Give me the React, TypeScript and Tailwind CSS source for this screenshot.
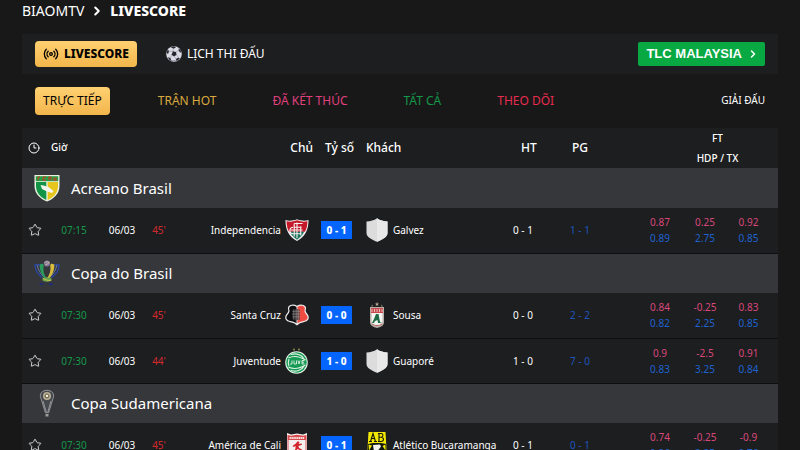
import { useState } from "react";
import { ChevronRight, Clock3, Radio, Star } from "lucide-react";

type Match = {
  time: string;
  minute: string;
  home: string;
  homeLogo: string;
  away: string;
  awayLogo: string;
  score: string;
  ht: string;
  corners: string;
  hdp: string[];
  tx: string[];
};

type League = {
  name: string;
  logo: string;
  matches: Match[];
};

const TABS = [
  { label: "TRỰC TIẾP", color: "text-black" },
  { label: "TRẬN HOT", color: "text-[#d9a93f]" },
  { label: "ĐÃ KẾT THÚC", color: "text-[#e0407f]" },
  { label: "TẤT CẢ", color: "text-[#14994a]" },
  { label: "THEO DÕI", color: "text-[#e82c4f]" },
];

const LEAGUES: League[] = [
  {
    name: "Acreano Brasil",
    logo: "acreano",
    matches: [
      {
        time: "07:15",
        minute: "45'",
        home: "Independencia",
        homeLogo: "independencia",
        away: "Galvez",
        awayLogo: "blank",
        score: "0 - 1",
        ht: "0 - 1",
        corners: "1 - 1",
        hdp: ["0.87", "0.25", "0.92"],
        tx: ["0.89", "2.75", "0.85"],
      },
    ],
  },
  {
    name: "Copa do Brasil",
    logo: "copa",
    matches: [
      {
        time: "07:30",
        minute: "45'",
        home: "Santa Cruz",
        homeLogo: "santacruz",
        away: "Sousa",
        awayLogo: "sousa",
        score: "0 - 0",
        ht: "0 - 0",
        corners: "2 - 2",
        hdp: ["0.84", "-0.25", "0.83"],
        tx: ["0.82", "2.25", "0.85"],
      },
      {
        time: "07:30",
        minute: "44'",
        home: "Juventude",
        homeLogo: "juventude",
        away: "Guaporé",
        awayLogo: "blank",
        score: "1 - 0",
        ht: "1 - 0",
        corners: "7 - 0",
        hdp: ["0.9", "-2.5", "0.91"],
        tx: ["0.83", "3.25", "0.84"],
      },
    ],
  },
  {
    name: "Copa Sudamericana",
    logo: "sudamericana",
    matches: [
      {
        time: "07:30",
        minute: "45'",
        home: "América de Cali",
        homeLogo: "america",
        away: "Atlético Bucaramanga",
        awayLogo: "bucaramanga",
        score: "0 - 1",
        ht: "0 - 1",
        corners: "0 - 1",
        hdp: ["0.74", "-0.25", "-0.9"],
        tx: ["0.96", "2.25", "0.76"],
      },
    ],
  },
];

function Ball() {
  return (
    <svg viewBox="0 0 16 16" className="size-4 shrink-0" aria-hidden="true">
      <circle cx="8" cy="8" r="7.8" fill="#dcdce6" />
      <path d="M1 11a7.8 7.8 0 0 0 14 0 9 9 0 0 1-14 0z" fill="#8f8fa3" />
      <path d="M7 5.3l3 .6.6 2.8-2.5 1.7-2.6-1.6z" fill="#25252f" />
      <path d="M4.5 1.2L8 .3l2 1-2.4 1.4zM12.8 2.3l2.3 2.8-.6 2-1.9-2.3zM.4 6.2L2 3.5l1 1.7-1 3zM2.2 11l2.4 1.2.8 2.7-2.6-1.6zM9.8 13l2.6-1.6 1.4 1.3-3 2.3z" fill="#2b2b38" />
      <path d="M7 5.3l.4-2.6M10 5.9l2.6-1.2M10.6 8.7l1.8 2.7M8.1 10.4l1.7 2.6M5.5 8.8l-.9 3.4M7 5.3L3 5.2" stroke="#7c7c90" strokeWidth=".5" fill="none" />
    </svg>
  );
}

function Crest({ name }: { name: string }) {
  switch (name) {
    case "acreano":
      return (
        <svg viewBox="0 0 26 28" className="h-7 w-[26px]" aria-hidden="true">
          <path d="M.5 1h25v11c0 8-6 13-12.500 15.500C6.500 25 .5 20 .5 12z" fill="#e9f3df" />
          <path d="M1.800 2.200h22.400v5H1.800z" fill="#23a148" />
          <path d="M4 3.200h2M4 3.200v3M9 3.200h3M9 3.200v3h3M15 6.200v-3h2v3M20 3.200v3h2v-3" stroke="#bd3f24" strokeWidth="1.200" fill="none" />
          <path d="M2 8h10.300v18C6 23 2 18.500 2 12z" fill="#129447" />
          <path d="M13.700 8H24v4c0 6.500-4 11-10.300 14z" fill="#e8c51c" />
          <path d="M6.500 11l4 .8 4 1.200 5 4-1.500 2-5-1.500-5-2.500z" fill="#f4f5ef" />
        </svg>
      );
    case "copa":
      return (
        <svg viewBox="0 0 28 28" className="size-7" aria-hidden="true">
          <path d="M7 5H1.200c0 7 3 10 8 14M21 5h5.800c0 7-3 10-8 14" stroke="#2b469c" strokeWidth="1.600" fill="none" />
          <path d="M3.500 5.500c1 5.500 3 8.500 7 12.500M24.500 5.500c-1 5.500-3 8.500-7 12.500" stroke="#7187bd" strokeWidth=".9" fill="none" />
          <path d="M6 5c2.500-1.500 4.500-1 4.500 1-1 5 0 10 3.500 14.500l-2 .5C8 16 6 11 6 5z" fill="#2c9a5c" />
          <path d="M22 5c-2.500-1.500-4.500-1-4.500 1 1 5-.5 10-4 14.500l2 .5c4.500-5 6.500-10 6.500-16z" fill="#d9bd3c" />
          <circle cx="14" cy="3.800" r="3.200" fill="#8077ad" />
          <path d="M11 3c2-1.500 4-1.500 6 0M12 5.500l4-2" stroke="#cfb77c" fill="none" />
          <ellipse cx="14" cy="21" rx="5" ry="2.300" fill="#69a54f" />
          <path d="M9.500 19.500c3 2 6 3 9 2.500" stroke="#d6c14d" strokeWidth=".9" fill="none" />
          <path d="M6 25h4v2H6zM16 25h4v2h-4z" fill="#1c2a80" />
        </svg>
      );
    case "sudamericana":
      return (
        <svg viewBox="0 0 16 28" className="h-7 w-[26px]" aria-hidden="true">
          <path d="M8 1C3 1 .5 4.500 1.500 8.500L6.500 25h3l5-16.500C15.500 4.500 13 1 8 1z" fill="#46494e" />
          <path d="M6.500 24L1.800 9C0 4.500 3.500 1.300 8 1.300S16 4.500 14.200 9L9.500 24M4 12l3.500 12M12 12L8.500 24" stroke="#a5a6a9" strokeWidth=".8" fill="none" />
          <circle cx="8" cy="7" r="4" fill="#b9ad91" />
          <path d="M8 4.800l2 1.500-.8 2.400H6.800L6 6.300z" fill="#f4edcf" stroke="#3b3932" strokeWidth=".8" />
          <path d="M6.500 25h3v2.500h-3z" fill="#9e9c98" />
        </svg>
      );
    case "independencia":
      return (
        <svg viewBox="0 0 26 24" className="h-6 w-[26px]" aria-hidden="true">
          <path d="M.5 1.200c4 1.200 8 .8 12.500-.9 4.500 1.700 8.500 2.100 12.500.9C25.500 12 22 19 13 24 4 19 .5 12 .5 1.200z" fill="#f3eeee" />
          <path d="M1.700 2.500c4 .9 7.300.4 11.300-1.100 4 1.500 7.300 2 11.300 1.100-.1 4.500-.8 8-2.800 11.500h-17C2.500 10.500 1.800 7 1.700 2.500z" fill="#c5192b" />
          <path d="M5.200 14h15.600c-2 3.800-4.500 6.300-7.800 8.500-3.300-2.200-5.800-4.700-7.800-8.500z" fill="#19725b" />
          <path d="M13 4v17M10 5h9M10 5v14M10 9h8M6 12h13M9 9c-5 0-5 7 0 7h9M17 8v10" stroke="#f5f1ef" strokeWidth="1.200" fill="none" />
        </svg>
      );
    case "santacruz":
      return (
        <svg viewBox="0 0 26 24" className="h-6 w-[26px]" aria-hidden="true">
          <path d="M3.500 3C6 0 10 0 13 2c3-2 7-2 9.500 1 1 2-.5 3.500 0 5 .5 2 3.300 4 3.300 6.500 0 4-3.300 5-6.800 5.500-2.500.5-4 1.500-6 3.500-2-2-3.500-3-6-3.500C3.500 19.500.2 18.500.2 14.500.2 12 3 10 3.500 8c.5-1.500-1-3 0-5z" fill="#eceaea" />
          <path d="M4.800 3.500C7 1.200 10 1.500 12.500 3.200V21c-2-1.500-3.500-2-5.500-2.300-3-.5-5.500-1.400-5.500-4.200 0-2 2.800-4 3.300-6 .5-2-1-3 0-5z" fill="#0d0d0f" />
          <path d="M21.200 3.500C19 1.200 16 1.500 13.500 3.200V21c2-1.500 3.500-2 5.500-2.300 3-.5 5.500-1.400 5.500-4.200 0-2-2.800-4-3.300-6-.5-2 1-3 0-5z" fill="#ef4b41" />
          <path d="M8 6.500c3-1.500 6-1.500 8 0V17c-2 1-5 1-8 0z" fill="#2d2b2d" opacity=".75" />
          <path d="M8 8h8.500M7.500 11h9M8 14h8.500M9.500 6v11M12 6v13M14.500 6v12" stroke="#b6aeae" strokeWidth=".5" fill="none" />
        </svg>
      );
    case "sousa":
      return (
        <svg viewBox="0 0 16 26" className="h-[26px] w-4" aria-hidden="true">
          <path d="M8 0l.6 1.400 1.400.1-1 1 .3 1.500L8 3.200 6.700 4 7 2.500l-1-1 1.400-.1zM3 2.500L4 4 2.500 5zM13 2.500L12 4l1.500 1z" fill="#b0a28c" />
          <path d="M1 5h14v15c0 3.500-3 5-7 6-4-1-7-2.500-7-6z" fill="#b9b0a9" />
          <path d="M2 6h12v5H2z" fill="#c84b4b" />
          <path d="M3 7v3M5.500 7v3M8 7v3M10.500 7v3M13 7v3" stroke="#f1dcdc" strokeWidth=".8" />
          <path d="M2.500 11h11v8.500c0 2.500-2 3.500-5.500 4.500-3.500-1-5.500-2-5.500-4.500z" fill="#f4f5f3" />
          <path d="M7 12h2.500l1.500 8 2 1H9l-.5-3L6 19l-1 2H3l2-4z" fill="#1c6b43" />
          <path d="M3 22c3 2 7 2 10 0" stroke="#b5605a" fill="none" />
        </svg>
      );
    case "juventude":
      return (
        <svg viewBox="0 0 24 26" className="h-[26px] w-6" aria-hidden="true">
          <path d="M9 0l1 1.500L9 3 8 1.500zM14 0l1 1.500L14 3l-1-1.500z" fill="#9c8a4c" />
          <circle cx="11.500" cy="14.500" r="11.300" fill="#e3f2e8" />
          <circle cx="11.500" cy="14.500" r="10.200" fill="#169a54" />
          <path d="M6 6.500c5-1.500 11 0 13 4.500M3.500 10c6-3 12-1 17 2M6 22.500c5 1.500 11 0 13-4.500M3.500 19c6 3 12 1 17-2M4 11c-1 3-1 5 0 7" stroke="#dff1e5" strokeWidth="1.100" fill="none" />
          <path d="M7 12.500v3.500H5M9 12.500V16h2.500v-3.500M13 12.500l1 3.500 1-3.500M19.500 12.500H17V16h2.500M17 14.200h2" stroke="#dff1e5" strokeWidth=".9" fill="none" />
        </svg>
      );
    case "america":
      return (
        <svg viewBox="0 0 22 26" className="h-[26px] w-[22px]" aria-hidden="true">
          <path d="M1 1l4 1.500 6-1 6 1L21 1v19c0 2-5 3-10 6-5-3-10-4-10-6z" fill="#f5eeee" />
          <path d="M1.500 3l3.500.8 6-1 6 1 3.500-.8v5h-19z" fill="#d84a4c" />
          <path d="M3.500 6h15" stroke="#fbe6e6" strokeWidth="1.800" strokeDasharray="1.400 .5" />
          <path d="M12 9l1.500 1.500-1 1.500 3-.5.5 1.200-3.500 1.300.5 2 3 1.500-.5 3-1.200-.2v-2l-3-1.200-1.800 3-2 .5 2-4v-2.600l-2 1-1-1 3-2.300z" fill="#d3242e" />
          <path d="M2 8v11c0 3 5 3 9 6 4-3 9-3 9-6V8" stroke="#d3545a" fill="none" />
        </svg>
      );
    case "bucaramanga":
      return (
        <svg viewBox="0 0 20 26" className="h-[26px] w-[22px]" aria-hidden="true">
          <path d="M1.500 0h17L20 26H0z" fill="#f3e900" />
          <path d="M2 9.500h3M3.500 9.500L6 1.500l2.500 8M7 9.500h3M4.800 6.500h2.800M12 1.500v8M11 1.500h3.200c2.300 0 2.300 3.700 0 3.700H12M14.200 5.200c3 0 3 4.300 0 4.300H11" stroke="#151510" strokeWidth="1.100" fill="none" />
          <path d="M1 12l5-1h8l5 1 .5 8-9.500 6-9.500-6z" fill="#121711" />
          <path d="M6 13l7-.5 1 2-3 4-4 1z" fill="#f2f2ec" />
          <path d="M1.500 12.500l3.500 1-3 5zM18.500 12.500l-3 1.500 3 4.500z" fill="#f3e900" />
        </svg>
      );
    default:
      return (
        <svg viewBox="0 0 22 24" className="h-6 w-[22px]" aria-hidden="true">
          <path d="M11 .3c3 2.200 6.500 3 10.500 3.200V15c0 4-5 6.500-10.500 8.800C5.500 21.500.5 19 .5 15V3.500C4.500 3.300 8 2.500 11 .3z" fill="#dcdcdc" />
          <path d="M11 .3c3 2.200 6.500 3 10.500 3.200V15c0 4-5 6.500-10.500 8.800z" fill="#e9e9e9" />
        </svg>
      );
  }
}

function Odds({ top, bottom }: { top: string; bottom: string }) {
  return (
    <>
      <div className="text-[#d9487b]">{top}</div>
      <div className="text-[#1d62cf]">{bottom}</div>
    </>
  );
}

function MatchRow({ match }: { match: Match }) {
  const [starred, setStarred] = useState(false);

  return (
    <tr className="h-[45px] border-b border-[#0e0e10] text-center">
      <td>
        <button
          aria-label="Theo dõi trận đấu"
          onClick={() => setStarred(!starred)}
          className="block cursor-pointer pl-[6px] text-[#d4d4d6]"
        >
          <Star className="size-[14px]" strokeWidth={1.7} fill={starred ? "currentColor" : "none"} />
        </button>
      </td>
      <td className="text-[#14994a]">{match.time}</td>
      <td>06/03</td>
      <td className="text-[#d3292d]">{match.minute}</td>
      <td>
        <div className="flex items-center justify-end gap-1 pr-1 whitespace-nowrap">
          {match.home}
          <span className="flex w-6 justify-center">
            <Crest name={match.homeLogo} />
          </span>
        </div>
      </td>
      <td>
        <span className="inline-block bg-[#0566ff] px-[6px] leading-[18px] font-extrabold">
          {match.score}
        </span>
      </td>
      <td>
        <div className="flex items-center gap-1 pl-[5px] whitespace-nowrap">
          <span className="flex w-6 justify-center">
            <Crest name={match.awayLogo} />
          </span>
          {match.away}
        </div>
      </td>
      <td>{match.ht}</td>
      <td className="text-[#1d55bd]">{match.corners}</td>
      <td className="pl-6">
        <Odds top={match.hdp[0]} bottom={match.tx[0]} />
      </td>
      <td>
        <Odds top={match.hdp[1]} bottom={match.tx[1]} />
      </td>
      <td className="pr-2">
        <Odds top={match.hdp[2]} bottom={match.tx[2]} />
      </td>
    </tr>
  );
}

export default function App() {
  const [tab, setTab] = useState(0);

  return (
    <div className="min-h-screen bg-[#181818] px-[22px] font-['Noto_Sans',sans-serif] text-white">
      <nav className="flex h-[34px] items-start gap-[6px] text-sm leading-[22px]">
        <a href="#">BIAOMTV</a>
        <ChevronRight className="mt-1 size-[14px]" strokeWidth={3.5} />
        <h1 className="font-extrabold">LIVESCORE</h1>
      </nav>

      <div className="flex h-10 items-center bg-[#1d1e20] px-[13px]">
        <button className="flex h-[26px] cursor-pointer items-center gap-[5px] rounded bg-linear-to-b from-[#ffd071] to-[#f2b64b] px-2 text-xs font-extrabold text-black">
          <Radio className="size-4" strokeWidth={2} />
          LIVESCORE
        </button>
        <button className="ml-[29px] flex cursor-pointer items-center gap-[5px] text-xs">
          <Ball />
          LỊCH THI ĐẤU
        </button>
        <a
          href="#"
          className="ml-auto flex h-6 items-center gap-[5px] rounded-xs bg-[#08a843] px-2 pr-[6px] font-['Liberation_Sans',sans-serif] text-[13px] font-bold"
        >
          TLC MALAYSIA
          <ChevronRight className="size-3" strokeWidth={3} />
        </a>
      </div>

      <div className="flex h-[54px] items-center px-[13px] text-xs">
        <div className="flex gap-10">
          {TABS.map((t, i) => (
            <button
              key={t.label}
              onClick={() => setTab(i)}
              className={`h-7 cursor-pointer rounded px-2 whitespace-nowrap ${t.color} ${
                tab === i ? "bg-linear-to-b from-[#ffd071] to-[#f2b64b]" : ""
              }`}
            >
              {t.label}
            </button>
          ))}
        </div>
        <a href="#" className="ml-auto text-[10px]">
          GIẢI ĐẤU
        </a>
      </div>

      <table className="w-full table-fixed border-collapse bg-[#1d1e20] text-[10px] leading-4">
        <colgroup>
          <col className="w-[26px]" />
          <col className="w-[52px]" />
          <col className="w-[44px]" />
          <col className="w-[30px]" />
          <col />
          <col className="w-[47px]" />
          <col />
          <col className="w-[48px]" />
          <col className="w-[66px]" />
          <col className="w-[70px]" />
          <col className="w-[44px]" />
          <col className="w-[51px]" />
        </colgroup>
        <thead>
          <tr className="h-10 text-xs">
            <th className="pl-[6px]">
              <Clock3 className="size-3" strokeWidth={2} aria-label="Thời gian" />
            </th>
            <th className="pl-[3px] text-left text-[10px] font-medium">Giờ</th>
            <th />
            <th />
            <th className="text-right font-medium">Chủ</th>
            <th className="pl-[6px] font-medium whitespace-nowrap">Tỷ số</th>
            <th className="pl-[6px] text-left font-medium">Khách</th>
            <th className="pl-3 font-medium">HT</th>
            <th className="font-medium">PG</th>
            <th colSpan={3} className="pl-11 text-[10px] leading-5 font-medium">
              <div>FT</div>
              <div>HDP / TX</div>
            </th>
          </tr>
        </thead>
        {LEAGUES.map((league) => (
          <tbody key={league.name}>
            <tr className="h-10 bg-[#36373b]">
              <th colSpan={12} className="text-left text-[15px] font-normal">
                <div className="flex items-center gap-[11px] pl-3">
                  <span className="flex w-[26px] justify-center">
                    <Crest name={league.logo} />
                  </span>
                  {league.name}
                </div>
              </th>
            </tr>
            {league.matches.map((match) => (
              <MatchRow key={match.home} match={match} />
            ))}
          </tbody>
        ))}
      </table>
    </div>
  );
}
